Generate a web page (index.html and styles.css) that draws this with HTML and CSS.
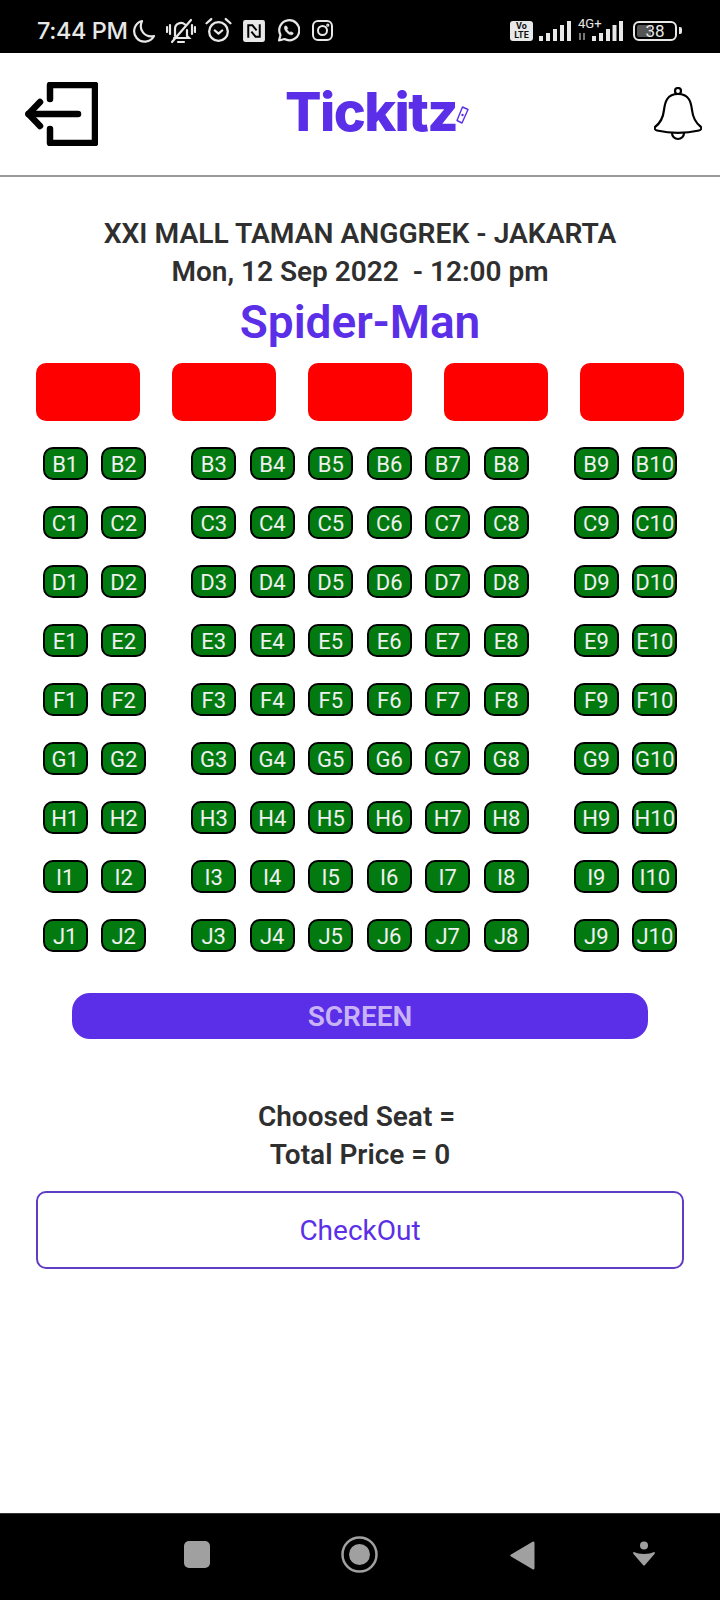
FILE: index.html
```html
<!DOCTYPE html>
<html lang="en">
<head>
<meta charset="utf-8">
<title>Tickitz seats</title>
<link rel="stylesheet" href="styles.css">
</head>
<body>
<div class="page">
  <div class="status">
    <span class="time">7:44 PM</span>
    <svg class="si moon" width="24" height="24" viewBox="0 0 24 24" fill="none" stroke="#e8e8e8" stroke-width="2.2"><path d="M10 2A10.500 10.500 0 1 0 22 17 C13 19 6 11 10 2Z" stroke-linejoin="round"/></svg>
    <svg class="si belloff" width="30" height="26" viewBox="0 0 30 26" fill="none" stroke="#e8e8e8" stroke-width="2.2" stroke-linecap="round"><path d="M9 18V11a6 6 0 0 1 10-4.500M21 12v6l2 2H8"/><path d="M12 24h6"/><path d="M1 9v5M4 7v9M26 7v9M29 9v5"/><path d="M6 24 25 2"/></svg>
    <svg class="si alarm" width="27" height="27" viewBox="0 0 26 26" fill="none" stroke="#e8e8e8" stroke-width="2.2" stroke-linecap="round" stroke-linejoin="round"><circle cx="13" cy="14" r="9"/><path d="M1.500 6 6 2M24.500 6 20 2M9.500 13l3.500 3 3.500-3"/></svg>
    <svg class="si nfc" width="24" height="24" viewBox="0 0 23 23" fill="none"><rect x="1" y="1" width="21" height="21" rx="2" fill="#e8e8e8"/><path d="M6 18V6h4l4 5M17 5v12h-4l-4-5" stroke="#000" stroke-width="1.900"/></svg>
    <svg class="si wa" width="23" height="23" viewBox="0 0 23 23" fill="none" stroke="#e8e8e8" stroke-width="2.200" stroke-linejoin="round"><path d="M2 21.500 3.500 16A10 10 0 1 1 7.500 20Z"/><path d="M8 7c-1 1-1 3 1 5.500s5 4 6.500 3l.8-1.500-2.300-1.300-1 .8c-1-.4-2.500-2-3-3l.8-1L9.500 7Z" fill="#e8e8e8" stroke-width=".6"/></svg>
    <svg class="si ig" width="21" height="21" viewBox="0 0 21 21" fill="none" stroke="#e8e8e8" stroke-width="2"><rect x="1" y="1" width="19" height="19" rx="5"/><circle cx="10.500" cy="10.500" r="4.500"/><circle cx="15.800" cy="5.200" r=".6"/></svg>
    <span class="spacer"></span>
    <span class="volte">Vo<br>LTE</span>
    <svg class="si sig" width="32" height="20" viewBox="0 0 32 20" fill="#e8e8e8"><rect x="0" y="15" width="4" height="5"/><rect x="7" y="12" width="4" height="8"/><rect x="14" y="8" width="4" height="12"/><rect x="21" y="4" width="4" height="16"/><rect x="28" y="0" width="4" height="20"/></svg>
    <span class="net"><span class="net-label">4G+</span><svg class="si" width="45" height="20" viewBox="0 0 45 20" fill="#e8e8e8"><rect x="1" y="12" width="2" height="7" fill="#777"/><rect x="5" y="12" width="2" height="7" fill="#777"/><rect x="14" y="15" width="4" height="5"/><rect x="21" y="12" width="4" height="8"/><rect x="28" y="8" width="4" height="12"/><rect x="34.500" y="4" width="4" height="16"/><rect x="41" y="0" width="4" height="20"/></svg></span>
    <span class="battery"><span class="battery-fill"></span><span class="battery-num">38</span></span>
    <span class="battery-tip"></span>
  </div>

  <header class="topbar">
    <svg class="exit" width="73" height="64" viewBox="0 0 73 64" fill="none" stroke="#000" stroke-width="6.500" stroke-linecap="round" stroke-linejoin="round"><path d="M25 17V3h45v58H25V47"/><path d="M3.500 32H53"/><path d="M15 20 3.500 32 15 44"/></svg>
    <div class="logo"><span class="logo-text">Tickitz</span><svg class="ticket" width="13" height="18" viewBox="0 0 13 18" fill="none" stroke="#5b2fe8" stroke-width="1.400" stroke-linejoin="round"><path d="M6.500 1 12 3.500 6 17 1 14.500Z"/><circle cx="6.500" cy="9" r="1.200" fill="#5b2fe8" stroke="none"/></svg></div>
    <svg class="bell" width="48" height="56" viewBox="0 0 48 56" fill="none" stroke="#000" stroke-width="2.200" stroke-linejoin="round"><circle cx="24" cy="4" r="3"/><path d="M24 7C13 7 11 15 10 23 9 32 5 37 1 40c-1 1 0 3 2 3.500 13 3 29 3 42 0 2-.5 3-2.500 2-3.500-4-3-8-8-9-17C37 15 35 7 24 7Z"/><path d="M18 46a6 6 0 1 0 12 0"/></svg>
  </header>

  <main class="main">
    <h2 class="cinema">XXI MALL TAMAN ANGGREK - JAKARTA</h2>
    <h3 class="when">Mon, 12 Sep 2022&nbsp; - 12:00 pm</h3>
    <h1 class="movie">Spider-Man</h1>

    <div class="blocks">
      <div class="block"></div><div class="block"></div><div class="block"></div><div class="block"></div><div class="block"></div>
    </div>

    <div class="rows">
      <div class="row"><div class="grp"><span class="seat">B1</span><span class="seat">B2</span></div><div class="grp"><span class="seat">B3</span><span class="seat">B4</span><span class="seat">B5</span><span class="seat">B6</span><span class="seat">B7</span><span class="seat">B8</span></div><div class="grp"><span class="seat">B9</span><span class="seat">B10</span></div></div>
      <div class="row"><div class="grp"><span class="seat">C1</span><span class="seat">C2</span></div><div class="grp"><span class="seat">C3</span><span class="seat">C4</span><span class="seat">C5</span><span class="seat">C6</span><span class="seat">C7</span><span class="seat">C8</span></div><div class="grp"><span class="seat">C9</span><span class="seat">C10</span></div></div>
      <div class="row"><div class="grp"><span class="seat">D1</span><span class="seat">D2</span></div><div class="grp"><span class="seat">D3</span><span class="seat">D4</span><span class="seat">D5</span><span class="seat">D6</span><span class="seat">D7</span><span class="seat">D8</span></div><div class="grp"><span class="seat">D9</span><span class="seat">D10</span></div></div>
      <div class="row"><div class="grp"><span class="seat">E1</span><span class="seat">E2</span></div><div class="grp"><span class="seat">E3</span><span class="seat">E4</span><span class="seat">E5</span><span class="seat">E6</span><span class="seat">E7</span><span class="seat">E8</span></div><div class="grp"><span class="seat">E9</span><span class="seat">E10</span></div></div>
      <div class="row"><div class="grp"><span class="seat">F1</span><span class="seat">F2</span></div><div class="grp"><span class="seat">F3</span><span class="seat">F4</span><span class="seat">F5</span><span class="seat">F6</span><span class="seat">F7</span><span class="seat">F8</span></div><div class="grp"><span class="seat">F9</span><span class="seat">F10</span></div></div>
      <div class="row"><div class="grp"><span class="seat">G1</span><span class="seat">G2</span></div><div class="grp"><span class="seat">G3</span><span class="seat">G4</span><span class="seat">G5</span><span class="seat">G6</span><span class="seat">G7</span><span class="seat">G8</span></div><div class="grp"><span class="seat">G9</span><span class="seat">G10</span></div></div>
      <div class="row"><div class="grp"><span class="seat">H1</span><span class="seat">H2</span></div><div class="grp"><span class="seat">H3</span><span class="seat">H4</span><span class="seat">H5</span><span class="seat">H6</span><span class="seat">H7</span><span class="seat">H8</span></div><div class="grp"><span class="seat">H9</span><span class="seat">H10</span></div></div>
      <div class="row"><div class="grp"><span class="seat">I1</span><span class="seat">I2</span></div><div class="grp"><span class="seat">I3</span><span class="seat">I4</span><span class="seat">I5</span><span class="seat">I6</span><span class="seat">I7</span><span class="seat">I8</span></div><div class="grp"><span class="seat">I9</span><span class="seat">I10</span></div></div>
      <div class="row"><div class="grp"><span class="seat">J1</span><span class="seat">J2</span></div><div class="grp"><span class="seat">J3</span><span class="seat">J4</span><span class="seat">J5</span><span class="seat">J6</span><span class="seat">J7</span><span class="seat">J8</span></div><div class="grp"><span class="seat">J9</span><span class="seat">J10</span></div></div>
    </div>

    <div class="screen">SCREEN</div>

    <p class="summary">Choosed Seat =&nbsp;</p>
    <p class="summary">Total Price = 0</p>

    <button class="checkout" type="button">CheckOut</button>
  </main>

  <nav class="navbar">
    <svg class="nav-square" width="26" height="27" viewBox="0 0 26 27"><rect width="26" height="27" rx="5" fill="#a0a0a0"/></svg>
    <svg class="nav-home" width="37" height="37" viewBox="0 0 37 37" fill="none"><circle cx="18.500" cy="18.500" r="17" stroke="#a0a0a0" stroke-width="2.500"/><circle cx="18.500" cy="18.500" r="10.500" fill="#a0a0a0"/></svg>
    <svg class="nav-back" width="25" height="31" viewBox="0 0 25 31"><path d="M23 1.500c1 0 1.500 .5 1.500 1.500v25c0 1-.5 1.500-1.500 1.500L1 16.500c-1-.5-1-1.500 0-2Z" fill="#a0a0a0"/></svg>
    <svg class="nav-down" width="22" height="25" viewBox="0 0 22 25"><ellipse cx="11" cy="4.500" rx="4" ry="4" fill="#a0a0a0"/><path d="M1 11c4 2.500 16 2.500 20 0 1-.5 1 1 .5 2L12 24c-.5 .7-1.500 .7-2 0L.5 13c-.5-1 -.5-2.500 .5-2Z" fill="#a0a0a0"/></svg>
  </nav>
</div>
</body>
</html>
```

FILE: styles.css
```css
* { box-sizing: border-box; }
html, body { margin: 0; padding: 0; background: #fff; }
body { font-family: Roboto, "Liberation Sans", sans-serif; }
.page { width: 720px; height: 1600px; display: flex; flex-direction: column; overflow: hidden; }

.status { height: 53px; background: #000; color: #e8e8e8; display: flex; align-items: center; padding: 8px 38px 0 37px; flex: none; }
.time { font-family: Inter, Roboto, sans-serif; font-size: 23.5px; font-weight: 500; letter-spacing: -0.4px; width: 95px; flex: none; white-space: nowrap; }
.si { display: block; flex: none; }
.belloff { margin-left: 10px; }
.alarm { margin-left: 9px; }
.nfc { margin-left: 10px; }
.wa { margin-left: 11px; }
.ig { margin-left: 12px; }
.spacer { flex: 1; }
.volte { width: 23px; height: 20px; background: #e8e8e8; color: #111; border-radius: 3px; font-size: 9px; line-height: 9px; font-weight: 700; text-align: center; padding-top: 1px; flex: none; }
.sig { margin-left: 6px; }
.net { position: relative; margin-left: 7px; display: block; width: 45px; height: 20px; flex: none; }
.net-label { position: absolute; left: 0; top: -4px; font-size: 13px; line-height: 13px; }
.battery { position: relative; margin-left: 10px; width: 44px; height: 20px; border: 2px solid #e8e8e8; border-radius: 6px; display: flex; align-items: center; justify-content: center; flex: none; }
.battery-fill { position: absolute; left: 2px; top: 2px; bottom: 2px; width: 14px; background: #555; border-radius: 2px; }
.battery-num { position: relative; font-size: 17px; line-height: 16px; color: #e8e8e8; }
.battery-tip { width: 3px; height: 7px; margin-left: 2px; background: #e8e8e8; border-radius: 0 2px 2px 0; flex: none; }

.topbar { height: 124px; border-bottom: 2px solid #9a9a9a; display: flex; align-items: flex-start; padding: 29px 18px 0 25px; flex: none; }
.exit { display: block; flex: none; }
.logo { margin-left: 187px; display: flex; align-items: flex-start; flex: none; width: 187px; }
.logo-text { font-family: Inter, Roboto, sans-serif; font-weight: 800; font-size: 54px; line-height: 60px; letter-spacing: -1.6px; color: #5b2fe8; }
.ticket { margin-top: 24px; margin-left: -1px; flex: none; }
.bell { margin-left: auto; margin-top: 5px; display: block; flex: none; }

.main { flex: 1; padding: 0 36px; display: flex; flex-direction: column; align-items: stretch; }
.cinema, .when { margin: 0; text-align: center; color: #2f2f2f; font-weight: 600; font-size: 28px; line-height: 38px; }
.cinema { margin-top: 38px; font-size: 28.2px; }
.movie { margin: 1px 0 0; text-align: center; color: #5b2fe8; font-weight: 600; font-size: 46px; line-height: 60px; }
.blocks { display: flex; justify-content: space-between; margin-top: 11px; }
.block { width: 104px; height: 58px; background: #ff0000; border-radius: 10px; }
.rows { display: flex; flex-direction: column; gap: 26px; margin: 26px 6.7px 0; }
.row { display: flex; justify-content: space-between; }
.grp { display: flex; gap: 13.5px; }
.seat { width: 45px; height: 33px; background: #037a10; border: 2px solid #000; border-radius: 10px; color: #f0f0f0; font-size: 22px; line-height: 31px; text-align: center; }
.screen { margin: 41px 36px 0; height: 46px; border-radius: 18px; background: #5b2fe8; color: #c9b3f7; font-size: 28px; font-weight: 600; line-height: 48px; text-align: center; }
.summary { margin: 0; text-align: center; color: #2f2f2f; font-weight: 600; font-size: 28px; line-height: 38px; }
.summary:first-of-type { margin-top: 59px; }
.checkout { margin-top: 17px; height: 78px; background: #fff; border: 2px solid #5f3dc4; border-radius: 10px; color: #5b2fe8; font-family: inherit; font-size: 28px; padding: 0; }

.navbar { height: 87px; background: #000; border-top: 1px solid #333; display: flex; align-items: flex-start; padding: 27px 0 0 184px; flex: none; }
.navbar svg { display: block; flex: none; }
.nav-home { margin-left: 131px; margin-top: -5px; }
.nav-back { margin-left: 132px; margin-top: -1px; }
.nav-down { margin-left: 98px; }
```
